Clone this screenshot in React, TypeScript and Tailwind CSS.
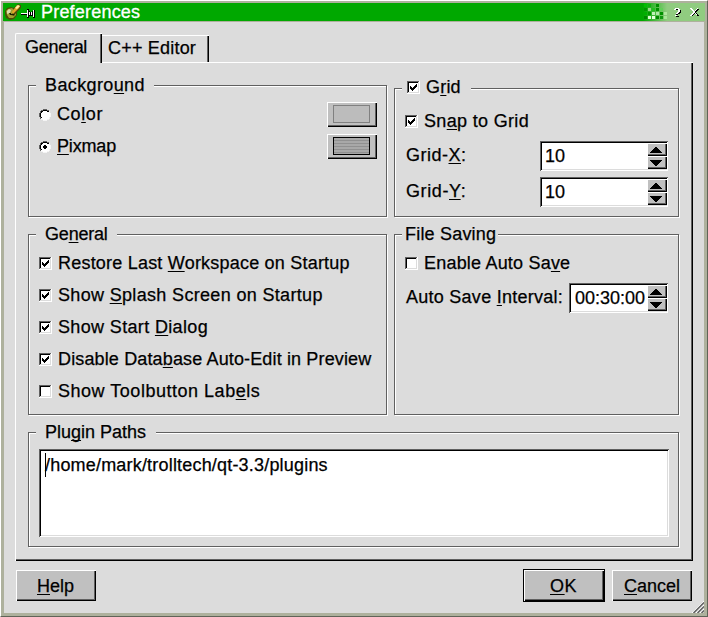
import type { ReactNode } from 'react';

const ETCHED = 'border border-[#606060] shadow-[1px_1px_0_#fff,inset_1px_1px_0_#fff]';
const RAISED = 'bg-[#c0c0c0] shadow-[inset_1px_1px_0_#fff,inset_-1px_-1px_0_#000,inset_-2px_-2px_0_#606060]';
const SUNKEN = 'bg-white shadow-[inset_1px_1px_0_#606060,inset_-1px_-1px_0_#fff,inset_2px_2px_0_#000,inset_-2px_-2px_0_#dcdcdc]';

function Label({ text, className = '' }: { text: string; className?: string }) {
  const [before, rest] = text.split('&');
  return (
    <span className={`block h-5 whitespace-pre leading-5 ${className}`}>
      {before}
      {rest !== undefined && (
        <>
          <span className="underline decoration-1 underline-offset-2 [text-decoration-skip-ink:none]">{rest[0]}</span>
          {rest.slice(1)}
        </>
      )}
    </span>
  );
}

function Check({ on }: { on?: boolean }) {
  return (
    <svg width="13" height="13" viewBox="0 0 13 13" shapeRendering="crispEdges" className="shrink-0">
      <path d="M0 0h13v13H0z" fill="#fff" />
      <path d="M1 11h11v1H1zM11 1h1v11h-1z" fill="#dcdcdc" />
      <path d="M0 0h12v1H0zM0 0h1v12H0z" fill="#606060" />
      <path d="M1 1h10v1H1zM1 1h1v10H1z" fill="#000" />
      {on && <path d="M3 5h1v3H3zM4 6h1v3H4zM5 7h1v3H5zM6 6h1v3H6zM7 5h1v3H7zM8 4h1v3H8zM9 3h1v3H9z" />}
    </svg>
  );
}

function Radio({ on }: { on?: boolean }) {
  return (
    <svg width="12" height="12" viewBox="0 0 12 12" shapeRendering="crispEdges" className="mt-0.5 shrink-0">
      <path d="M4 1h4v1h2v2h1v4h-1v2H8v1H4v-1H2V8H1V4h1V2h2z" fill="#fff" />
      <path d="M4 0h4v1H4zM2 1h2v1H2zM8 1h2v1H8zM1 2h1v2H1zM0 4h1v4H0zM1 8h1v2H1z" fill="#606060" />
      <path d="M4 1h4v1H4zM2 2h2v1H2zM8 2h2v1H8zM2 3h1v1H2zM1 4h1v4H1zM2 8h1v1H2z" fill="#000" />
      <path d="M10 2h1v2h-1zM11 4h1v4h-1zM10 8h1v2h-1zM8 10h2v1H8zM4 11h4v1H4zM2 10h2v1H2z" fill="#f4f4f4" />
      {on && <path d="M5 4h2v1h1v2H7v1H5V7H4V5h1z" />}
    </svg>
  );
}

function Group({ legend, className, legendClass, children }: { legend: ReactNode; className: string; legendClass: string; children: ReactNode }) {
  return (
    <section className={`${ETCHED} ${className}`}>
      <div className={`ml-[7px] flex h-5 items-center bg-[#dcdcdc] ${legendClass}`}>{legend}</div>
      {children}
    </section>
  );
}

function Option({ text, on, className = '' }: { text: string; on?: boolean; className?: string }) {
  return (
    <div className="flex h-8 items-center">
      <Check on={on} />
      <Label text={text} className={`ml-1.5 ${className}`} />
    </div>
  );
}

function SpinArrow({ up }: { up?: boolean }) {
  return (
    <div className="flex h-[13px] w-5 items-center justify-center bg-[#c0c0c0] shadow-[inset_1px_1px_0_#fff,inset_-1px_-1px_0_#000,inset_-2px_-2px_0_#606060]">
      <svg width="12" height="6" viewBox="0 0 12 6" shapeRendering="crispEdges" className="-ml-0.5">
        <path d={up ? 'M5 0h2v1h1v1h1v1h1v1h1v1h1v1H0V5h1V4h1V3h1V2h1V1h1z' : 'M0 0h12v1h-1v1h-1v1H9v1H8v1H7v1H5V5H4V4H3V3H2V2H1V1H0z'} />
      </svg>
    </div>
  );
}

function Spin({ value, className }: { value: string; className: string }) {
  return (
    <div className={`flex h-[30px] justify-between p-0.5 pr-px ${SUNKEN} ${className}`}>
      <Label text={value} className="mt-[3px]" />
      <div className="flex flex-col">
        <SpinArrow up />
        <SpinArrow />
      </div>
    </div>
  );
}

const options = [
  { text: 'Restore Last &Workspace on Startup', on: true, className: 'tracking-[0.21px]' },
  { text: 'Show &Splash Screen on Startup', on: true, className: 'tracking-[0.33px]' },
  { text: 'Show Start &Dialog', on: true, className: 'tracking-[0.35px]' },
  { text: 'Disable Data&base Auto-Edit in Preview', on: true, className: 'tracking-[0.14px]' },
  { text: 'Show Toolbutton Lab&els', on: false, className: 'tracking-[0.52px]' },
];

const TITLE_BLOCKS = [
  [0, 0, '#00c000'], [4, 0, '#10b010'], [12, 0, '#009000'],
  [0, 4, '#009800'], [4, 4, '#98d888'], [8, 4, '#20c020'], [12, 4, '#009000'], [16, 4, '#60d058'],
  [0, 8, '#00b000'], [4, 8, '#009800'], [8, 8, '#c0f0b8'], [12, 8, '#b0e8a8'], [16, 8, '#009000'], [20, 8, '#b0e8a0'],
  [0, 12, '#008800'], [4, 12, '#d8ffd0'], [8, 12, '#e8ffe0'], [12, 12, '#008800'], [16, 12, '#109810'], [20, 12, '#a8e898'],
] as const;

function TitleBar() {
  return (
    <header className="flex h-[18px] items-center bg-[#00a800] text-white">
      <svg width="16" height="16" viewBox="0 0 16 16" className="ml-0.5 shrink-0">
        <path d="M0 7 2 4l4-1 3 1 4-4 3 1v3l-4 4v3l-3 4-4 1-4-2-1-4z" fill="#4c4c08" />
        <path d="M1 7l2-2 4-1 2 2-1 3-2 2 3 1 2-3v2l-3 3H4l-2-3z" fill="#a0a030" />
        <path d="M2 7l2-2 2 1-1 3-3 1z" fill="#dcdcac" />
        <path d="M7 8 12 1l3 1-1 2-6 6z" fill="#e4a428" />
        <path d="M10 4l3-3 2 1-3 3z" fill="#fff0a0" />
        <path d="M4 9h2v1h3v1H5z" fill="#202000" />
      </svg>
      <svg width="15" height="10" viewBox="0 0 15 10" shapeRendering="crispEdges" className="mt-[3px] shrink-0">
        <path d="M0 5h6v1H0zM6 0h2v9H6zM8 2h1v5H8zM9 3h2v4H9zM11 2h1v5h-1zM12 1h2v8h-2z" fill="#000" />
        <path d="M0 4h6v1H0zM6 1h1v7H6zM8 3h1v3H8zM10 3h1v3h-1zM12 1h1v7h-1z" fill="#fff" />
      </svg>
      <Label text="Preferences" className="ml-[5px] tracking-[0.2px] [-webkit-text-stroke:0.3px_#fff]" />
      <svg width="24" height="18" viewBox="0 0 24 18" shapeRendering="crispEdges" className="ml-auto shrink-0">
        <defs>
          <linearGradient id="fade"><stop stopColor="#00a800" /><stop offset="1" stopColor="#90cc80" /></linearGradient>
        </defs>
        <path d="M0 0h24v18H0z" fill="url(#fade)" />
        {TITLE_BLOCKS.map(([x, y, c]) => <rect key={`${x}-${y}`} x={x + 1} y={y + 1} width="3" height="3" fill={c} />)}
      </svg>
      <div className="flex h-full w-[38px] items-center bg-[#90cc80]">
        <svg width="38" height="18" viewBox="0 0 38 18" shapeRendering="crispEdges">
          <path d="M9 6h4v1h1v3h-1v1h-2v1H9v-1h1v-1h2V7H8V6zM9 13h3v1H9z" fill="#000" />
          <path d="M7 6h1V5h4v1h1v3h-1v1h-1v1H9v-1h1V9h1V6H9v1H7zM8 12h2v1H8z" fill="#fff" />
          <path d="M24 6h2v1h1v1h2V7h1V6h2v1h-1v1h-1v1h-1v1h1v1h1v1h1v1h-2v-1h-1v-1h-2v1h-1v1h-2v-1h1v-1h1v-1h1V9h-1V8h-1V7h-1z" fill="#000" />
          <path d="M23 5h2v1h1v1h1v1h1V7h1V6h1V5h1v1h-1v1h-1v1h-1v2h1v1h1v1h-1v-1h-1v-1h-1v1h-1v1h-1v1h-2v-1h1v-1h1v-1h1V8h-1V7h-1V6h-1z" fill="#fff" />
        </svg>
      </div>
    </header>
  );
}

export default function App() {
  return (
    <div className="h-[617px] w-[708px] overflow-hidden border border-t-white border-r-[#606458] border-b-[#606458] border-l-white bg-[#aeb19d] pt-0.5 pr-[3px] pb-[3px] pl-[3px] font-['Liberation_Sans',Arial,sans-serif] text-[18px] text-black [-webkit-text-stroke:0.25px_#000]">
      <div className="-mx-px"><TitleBar /></div>
      <main className="mt-px flex h-[591px] flex-col bg-[#dcdcdc] pr-[11px] pl-[11px]">
        <div className="flex h-10 items-end pt-[11px]">
          <div className="z-10 -mb-px h-[30px] w-[87px] shrink-0 rounded-tl-[2px] border-t border-l border-white bg-[#dcdcdc] pl-[9px] shadow-[inset_-1px_0_0_#000,inset_-2px_0_0_#606060]">
            <Label text="General" className="mt-[3px] tracking-[-0.28px]" />
          </div>
          <div className="h-[27px] w-[107px] border-t border-white pl-1.5 shadow-[inset_-1px_0_0_#000,inset_-2px_0_0_#606060]">
            <Label text="C++ Editor" className="mt-0.5 tracking-[0.2px]" />
          </div>
        </div>
        <div className="h-[499px] w-[678px] shadow-[inset_1px_1px_0_#fff,inset_-1px_-1px_0_#000,inset_-2px_-2px_0_#606060]">
          <div className="flex pt-[23px] pl-[13px]">
            <Group className="h-[132px] w-[359px]" legendClass="-mt-[11px] w-[118px] pl-[9px]" legend={<Label text="Backgro&und" className="tracking-[0.38px]" />}>
              <div className="mt-[3px] flex justify-between pr-[9px] pl-2.5">
                <div>
                  <div className="flex h-8 items-center"><Radio /><Label text="Co&lor" className="ml-1.5 tracking-[0.6px]" /></div>
                  <div className="flex h-8 items-center"><Radio on /><Label text="&Pixmap" className="ml-1.5 tracking-[-0.17px]" /></div>
                </div>
                <div className="flex flex-col gap-[7px] pt-1">
                  <button className={`flex h-[25px] w-[50px] items-start pt-[3px] pl-1.5 ${RAISED}`}>
                    <span className="block h-[18px] w-[37px] border border-[#808080] bg-[#bcbcbc]" />
                  </button>
                  <button className={`flex h-[25px] w-[50px] items-start pt-[3px] pl-1.5 ${RAISED}`}>
                    <span className="block h-[18px] w-[37px] border border-black bg-[repeating-linear-gradient(180deg,#a8a8a8_0_2px,#909090_2px_3px)]" />
                  </button>
                </div>
              </div>
            </Group>
            <Group
              className="mt-[3px] ml-[7px] h-[129px] w-[285px]"
              legendClass="-mt-3 w-[69px] pl-[5px]"
              legend={<><Check on /><Label text="G&rid" className="ml-1.5 tracking-[0.2px]" /></>}
            >
              <div className="pt-2 pr-2.5 pl-2.5">
                <Option on text="Sn&ap to Grid" className="tracking-[0.33px]" />
                <div className="mt-1 flex justify-between"><Label text="Grid-&X:" className="mt-1 ml-px tracking-[0.5px]" /><Spin value="10" className="w-32 pl-[5px]" /></div>
                <div className="mt-1.5 flex justify-between"><Label text="Grid-&Y:" className="mt-1 ml-px tracking-[0.6px]" /><Spin value="10" className="w-32 pl-[5px]" /></div>
              </div>
            </Group>
          </div>
          <div className="mt-[17px] flex pl-[13px]">
            <Group className="h-[181px] w-[359px]" legendClass="-mt-[11px] w-[81px] pl-[9px]" legend={<Label text="Ge&neral" className="tracking-[-0.2px]" />}>
              <div className="mt-[3px] pl-2.5">
                {options.map((o) => <Option key={o.text} {...o} />)}
              </div>
            </Group>
            <Group className="ml-[7px] h-[181px] w-[285px]" legendClass="-mt-[11px] w-[96px] pl-[3px]" legend={<Label text="File Saving" className="tracking-[0.2px]" />}>
              <div className="mt-[3px] pr-2.5 pl-2.5">
                <Option text="Enable Auto Sa&ve" className="tracking-[0.2px]" />
                <div className="mt-1 flex justify-between"><Label text="Auto Save &Interval:" className="mt-1 ml-px tracking-[0.26px]" /><Spin value="00:30:00" className="w-[99px] pl-1.5" /></div>
              </div>
            </Group>
          </div>
          <div className="mt-[17px] pl-[13px]">
            <Group className="h-[115px] w-[651px]" legendClass="-mt-[11px] w-[120px] pl-[9px]" legend={<Label text="Plu&gin Paths" />}>
              <div className={`mt-[7px] ml-2.5 flex h-[88px] w-[630px] pt-1 pl-1.5 ${SUNKEN}`}>
                <span className="-mr-px h-6 w-px bg-black" />
                <Label text="/home/mark/trolltech/qt-3.3/plugins" className="mt-0.5 tracking-[0.19px]" />
              </div>
            </Group>
          </div>
        </div>
        <footer className="mt-2 flex items-center pr-px pl-px">
          <button className={`h-[31px] w-20 pl-[21px] text-left ${RAISED}`}><Label text="&Help" /></button>
          <button className="ml-auto h-[33px] w-[82px] border border-black bg-[#c0c0c0] pl-[26px] text-left shadow-[inset_1px_1px_0_#fff,inset_-1px_-1px_0_#000,inset_-2px_-2px_0_#606060]"><Label text="&OK" className="tracking-[0.6px]" /></button>
          <button className={`ml-[7px] h-[31px] w-20 pl-3 text-left ${RAISED}`}><Label text="&Cancel" /></button>
        </footer>
        <svg width="12" height="12" viewBox="0 0 12 12" className="-mr-[11px] -mt-px ml-auto shrink-0">
          <path d="M0 12 12 0M4 12l8-8M8 12l4-4" stroke="#fff" />
          <path d="M1.500 12 12 1.500M5.500 12 12 5.500M9.500 12 12 9.500" stroke="#606060" strokeWidth="1.500" />
        </svg>
      </main>
    </div>
  );
}
